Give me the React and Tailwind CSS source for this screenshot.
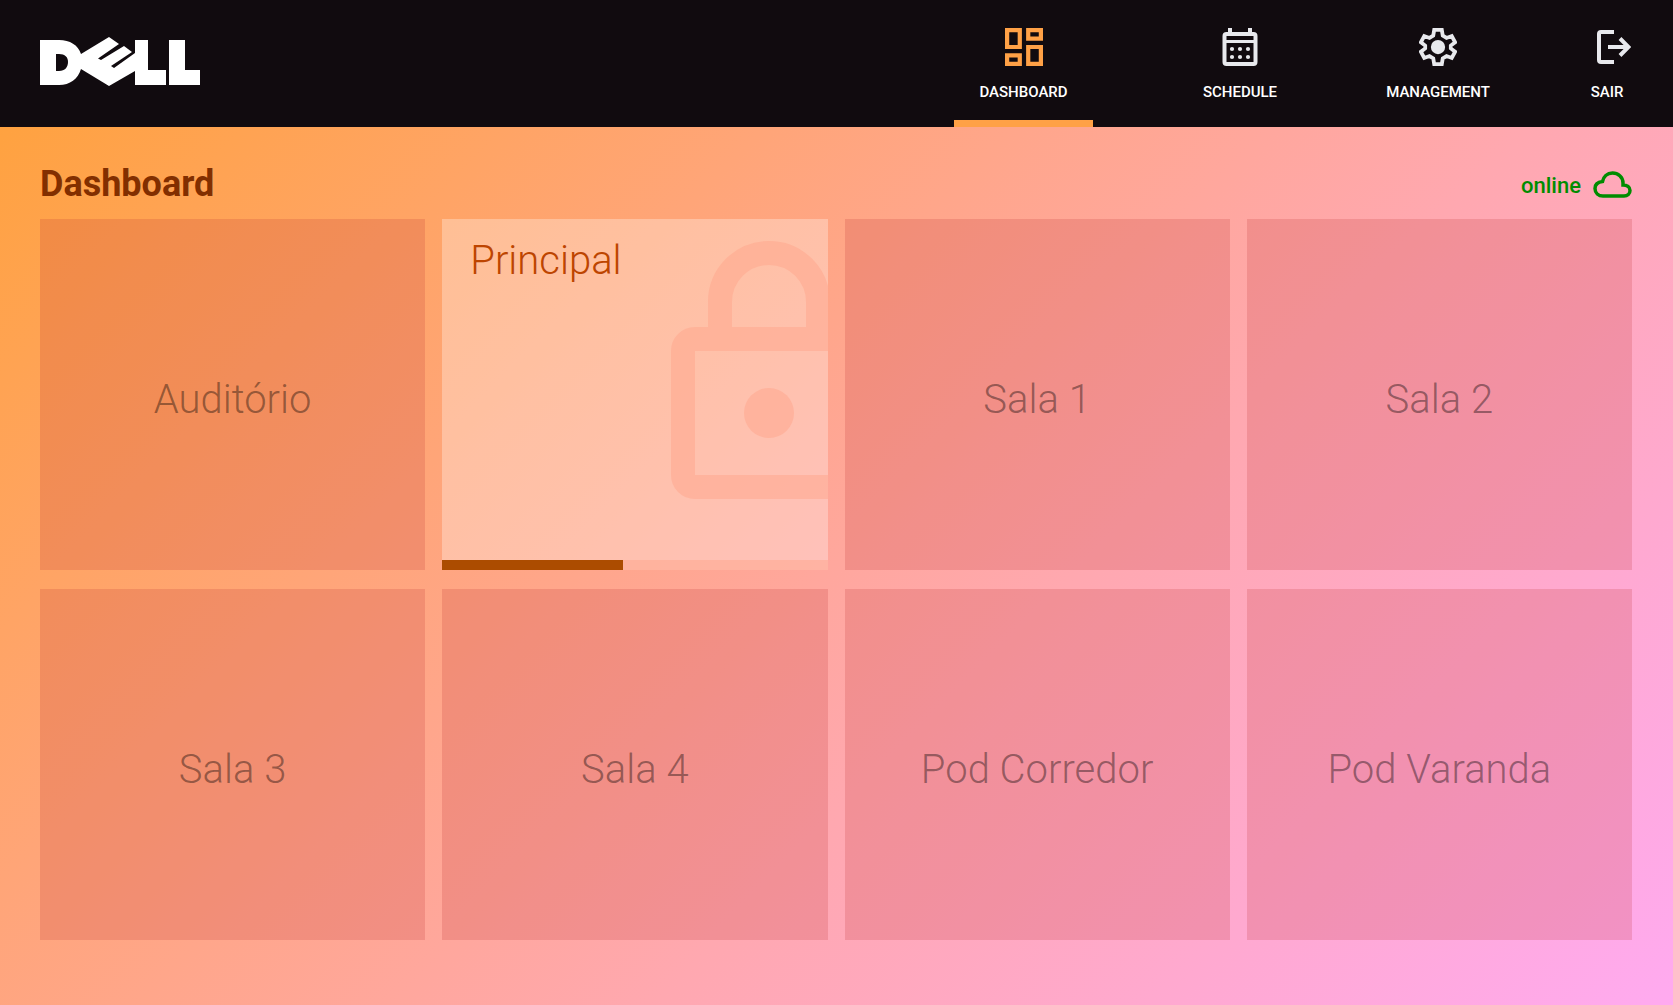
const font = 'font-[Roboto,"Open_Sans",sans-serif]';

function DellLogo() {
  return (
    <svg viewBox="0 0 160 50" className="h-[50px] w-[160px]" fill="#fff" role="img" aria-label="Dell">
      <path
        fillRule="evenodd"
        d="M0 3H19C30 3 38 8 41 17L69 0L79 7L58 21.500L61 23L84 9L92 15L71 29L74 31L95 16V3H108V33H126V48H95V34L69 49L41 32C38 42 30 48 19 48H0ZM16 17V34H19C25 34 28 30 28 25C28 20 25 17 19 17Z"
      />
      <path d="M129 3H145V33H160V48H129Z" />
    </svg>
  );
}

function DashboardIcon() {
  return (
    <svg viewBox="3 3 18 18" className="size-[38px]" fill="currentColor" aria-hidden="true">
      <path d="M19 5v2h-4V5h4M9 5v6H5V5h4m10 8v6h-4v-6h4M9 17v2H5v-2h4M21 3h-8v6h8V3zM11 3H3v10h8V3zm10 8h-8v10h8V11zm-10 4H3v6h8v-6z" />
    </svg>
  );
}

function CalendarIcon() {
  return (
    <svg viewBox="0 0 36 38" className="h-[38px] w-9" aria-hidden="true">
      <rect x="2.500" y="6" width="31" height="30" rx="2" fill="none" stroke="currentColor" strokeWidth="4" />
      <path d="M6 0h4v5H6zM26 0h4v5h-4zM2 12h32v3H2z" fill="currentColor" />
      <g fill="currentColor">
        <circle cx="10" cy="21" r="2.100" />
        <circle cx="18" cy="21" r="2.100" />
        <circle cx="26" cy="21" r="2.100" />
        <circle cx="10" cy="29" r="2.100" />
        <circle cx="18" cy="29" r="2.100" />
        <circle cx="26" cy="29" r="2.100" />
      </g>
    </svg>
  );
}

function GearIcon() {
  return (
    <svg viewBox="0 0 40 40" className="size-[38px]" aria-hidden="true">
      <path
        d="M16 2H24L25 8L29 10.500L34.500 8.500L38 15L33.500 18.500V21.500L38 25L34.500 31.500L29 29.500L25 32L24 38H16L15 32L11 29.500L5.500 31.500L2 25L6.500 21.500V18.500L2 15L5.500 8.500L11 10.500L15 8Z"
        fill="none"
        stroke="currentColor"
        strokeWidth="4"
      />
      <circle cx="20" cy="20" r="7.500" fill="currentColor" />
    </svg>
  );
}

function ExitIcon() {
  return (
    <svg viewBox="0 0 48 38" className="h-[38px] w-12" fill="none" stroke="currentColor" strokeWidth="4" aria-hidden="true">
      <path d="M31 4H18Q16 4 16 6V32Q16 34 18 34H31M25 19H45" />
      <path d="M37 10.500L45.500 19L37 27.500" />
    </svg>
  );
}

function CloudIcon() {
  return (
    <svg viewBox="0 0 39 27" className="h-[27px] w-[39px]" fill="none" stroke="currentColor" strokeWidth="3.500" aria-hidden="true">
      <path d="M10 25H31C34.500 25 37 22.500 37 19.500C37 16 34 14 30 14V12C30 6 25 2 19.500 2C14 2 10.500 6 9.500 10.500C5 11 2 13.500 2 17.500C2 22 5.500 25 10 25Z" />
    </svg>
  );
}

function LockIcon() {
  return (
    <svg viewBox="0 0 196 258" className="h-[258px] w-[196px] shrink-0" fill="none" stroke="currentColor" strokeWidth="24" aria-hidden="true">
      <path d="M49 86V61a49 49 0 0 1 98 0v25" />
      <rect x="12" y="98" width="172" height="148" rx="12" />
      <circle cx="98" cy="172" r="25" fill="currentColor" stroke="none" />
    </svg>
  );
}

function NavItem({ label, icon, active, className }) {
  return (
    <a
      href="#"
      aria-current={active ? "page" : undefined}
      className={"flex flex-col items-center border-b-[7px] pt-7 text-[15px] leading-6 font-medium text-white " + className + (active ? " border-[#ffa146]" : " border-transparent")}
    >
      <span className={active ? "text-[#ffa146]" : "text-[#e8e9ed]"}>{icon}</span>
      <span className="mt-[14px]">{label}</span>
    </a>
  );
}

function Room({ name }) {
  return (
    <button type="button" className="flex items-center justify-center bg-[#c03333]/20 pt-2.5 text-[40px] leading-12 font-light text-black/40">
      {name}
    </button>
  );
}

function BusyRoom({ name, progress }) {
  return (
    <button type="button" className="flex flex-col overflow-hidden bg-white/30 text-left text-[#bd4500]">
      <span className="flex w-full grow items-start pt-[22px] pl-7">
        <span className="w-[201px] shrink-0 text-[40px] leading-10 font-light">{name}</span>
        <span className="text-[#ffa68c]/50"><LockIcon /></span>
      </span>
      <span className="h-[10px] w-full bg-[#ffa68c]/50">
        <span className="block h-full bg-[#ac4c00]" style={{ width: progress + "%" }} />
      </span>
    </button>
  );
}

export default function App() {
  return (
    <div className={"flex min-h-screen flex-col bg-[#110b0f] " + font}>
      <header className="flex h-[127px] justify-between bg-[#110b0f] pl-10">
        <a href="#" className="mt-[37px] self-start"><DellLogo /></a>
        <nav className="flex">
          <NavItem label="DASHBOARD" icon={<DashboardIcon />} active className="mr-[77px] w-[139px]" />
          <NavItem label="SCHEDULE" icon={<CalendarIcon />} className="mr-[58px] w-[140px]" />
          <NavItem label="MANAGEMENT" icon={<GearIcon />} className="mr-[63px] w-[140px]" />
          <NavItem label="SAIR" icon={<ExitIcon />} className="mr-[30px] w-[72px]" />
        </nav>
      </header>
      <main className="flex grow flex-col bg-linear-[135deg,#ffa240,#ffa8b0_60%,#ffaaf0] pr-[41px] pb-[65px] pl-10">
        <div className="flex h-[92px] items-center justify-between pt-[22px]">
          <h1 className="text-4xl font-bold text-[#822f00]">Dashboard</h1>
          <p className="flex items-center gap-3 text-[22px] leading-8 font-medium text-[#008c00]">
            <span className="pt-1">online</span> <CloudIcon />
          </p>
        </div>
        <div className="grid grow grid-cols-4 grid-rows-2 gap-x-[17px] gap-y-[19px]">
          <Room name="Auditório" />
          <BusyRoom name="Principal" progress={47} />
          <Room name="Sala 1" />
          <Room name="Sala 2" />
          <Room name="Sala 3" />
          <Room name="Sala 4" />
          <Room name="Pod Corredor" />
          <Room name="Pod Varanda" />
        </div>
      </main>
    </div>
  );
}
